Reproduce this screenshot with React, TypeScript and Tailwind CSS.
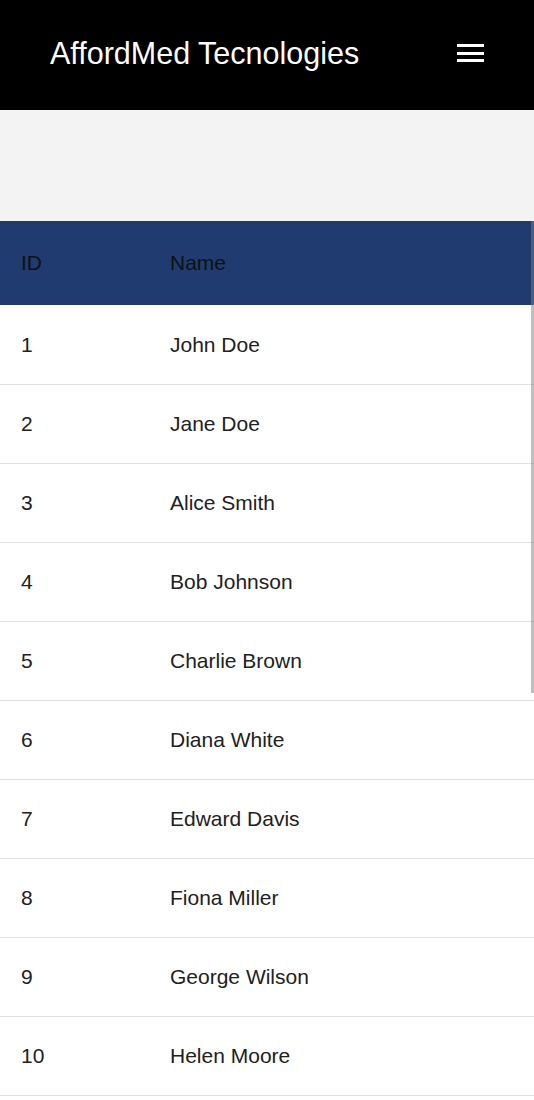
const users = [
  { id: 1, name: 'John Doe' },
  { id: 2, name: 'Jane Doe' },
  { id: 3, name: 'Alice Smith' },
  { id: 4, name: 'Bob Johnson' },
  { id: 5, name: 'Charlie Brown' },
  { id: 6, name: 'Diana White' },
  { id: 7, name: 'Edward Davis' },
  { id: 8, name: 'Fiona Miller' },
  { id: 9, name: 'George Wilson' },
  { id: 10, name: 'Helen Moore' },
]

function Navbar() {
  return (
    <header className="flex h-[110px] items-center justify-between bg-black px-[50px] pb-[4px]">
      <h1 className="text-[30.5px] font-normal leading-none text-white">AffordMed Tecnologies</h1>
      <button aria-label="menu" className="flex w-[27px] flex-col gap-[4.5px]">
        <span className="h-[3px] w-full bg-white" />
        <span className="h-[3px] w-full bg-white" />
        <span className="h-[3px] w-full bg-white" />
      </button>
    </header>
  )
}

export default function App() {
  return (
    <div className="min-h-screen bg-white font-['Liberation_Sans',Arial,sans-serif]">
      <Navbar />
      <div className="h-[111px] bg-[#f3f3f3]" />
      <div className="relative">
        <table className="w-full table-fixed border-collapse text-left text-[21px]">
          <colgroup>
            <col className="w-[170px]" />
            <col />
          </colgroup>
          <thead>
            <tr className="h-[84px] bg-[#1f3b6f] text-[#111]">
              <th className="pl-[21px] font-normal">ID</th>
              <th className="font-normal">Name</th>
            </tr>
          </thead>
          <tbody>
            {users.map((u) => (
              <tr key={u.id} className="h-[79px] border-b border-[#e0e0e0] text-[#212121]">
                <td className="pl-[21px]">{u.id}</td>
                <td>{u.name}</td>
              </tr>
            ))}
          </tbody>
        </table>
        <div className="absolute right-0 top-0 h-[472px] w-[3px] bg-[#808080]/50" />
      </div>
    </div>
  )
}
